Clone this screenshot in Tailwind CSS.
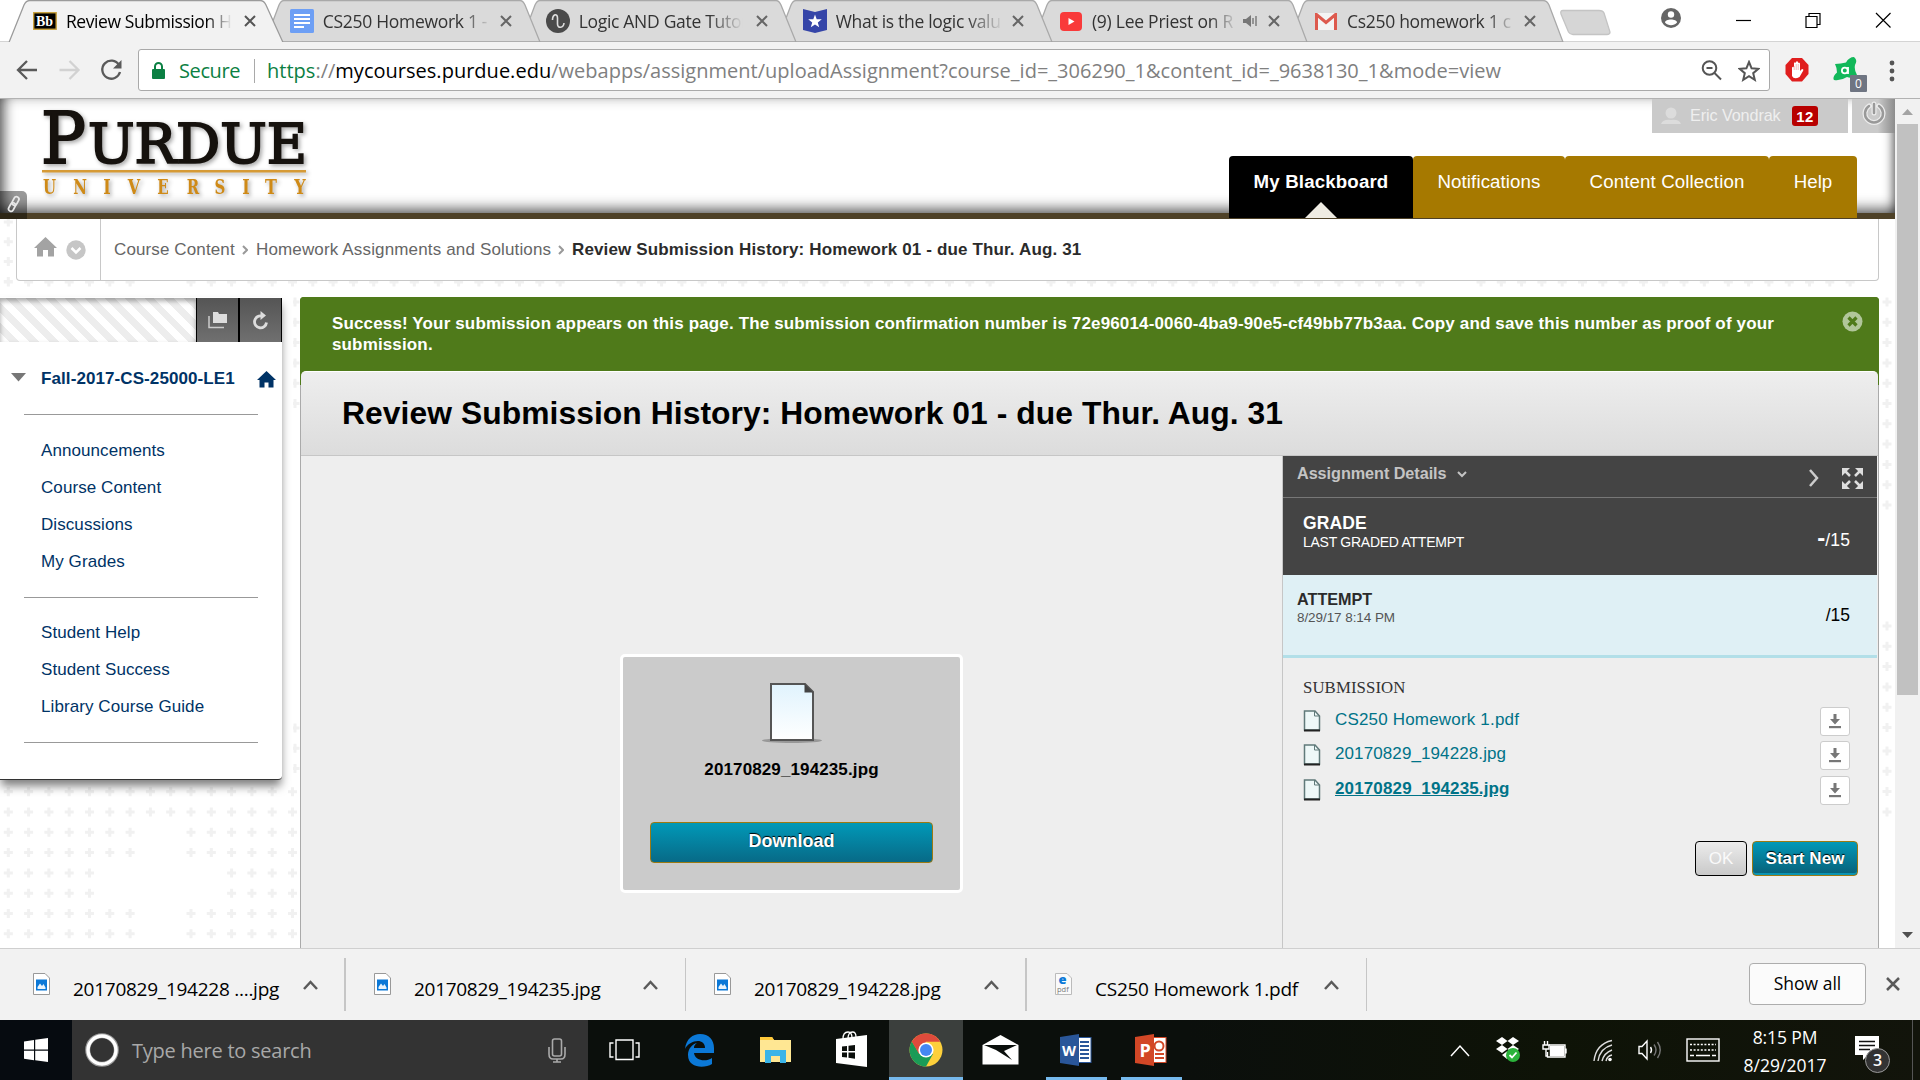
<!DOCTYPE html>
<html lang="en">
<head>
<meta charset="utf-8">
<title>Review Submission History</title>
<script src="https://cdn.jsdelivr.net/npm/@tailwindcss/browser@4"></script>
</head>
<body class="w-[1920px] h-[1080px] overflow-hidden bg-white flex flex-col font-['Liberation_Sans',Arial,sans-serif]">

<!-- Tab strip -->
<div class="relative h-[42px] shrink-0 flex font-['Open_Sans',sans-serif] text-[17.5px] leading-[43px] text-[#333]">
  <svg class="absolute left-0 top-0" width="1920" height="43" fill="#dadada" stroke="#a9a9a9" stroke-width="1.3">
    <path d="M0 42.4H1920" stroke="#a0a0a0"/>
    <path d="M1308 .5Q1305 .5 1303 5L1289 42H1563L1549 5Q1547 .5 1543 .5Z"/>
    <path d="M1052 .5Q1049 .5 1047 5L1033 42H1307L1293 5Q1291 .5 1288 .5Z"/>
    <path d="M796 .5Q793 .5 791 5L777 42H1052L1037 5Q1035 .5 1032 .5Z"/>
    <path d="M540 .5Q537 .5 535 5L521 42H796L781 5Q779 .5 776 .5Z"/>
    <path d="M284 .5Q281 .5 279 5L265 42H540L525 5Q523 .5 520 .5Z"/>
    <path d="M0 42.4H9L24 5Q26 .5 30 .5H260Q264 .5 266 5L283 42.4V44H0Z" fill="#f2f2f2" stroke="none"/>
    <path d="M0 42.4H9L24 5Q26 .5 30 .5H260Q264 .5 266 5L283 42.4H1920" fill="none" stroke="#9b9b9b"/>
    <path d="M1563 10.500H1599Q1603 10.500 1604 13L1610 32Q1610 34.500 1607 34.500H1573Q1570 34.500 1568.500 32L1561 14Q1560 10.500 1563 10.500Z" fill="#d6d6d6" stroke="#c4c4c4"/>
  </svg>
  <div class="relative w-[256px] shrink-0 flex items-center pl-[33px]">
    <svg width="24" height="20" viewBox="0 0 24 20"><rect x=".7" y="1.700" width="22.600" height="16.600" fill="#000" stroke="#c9a13c" stroke-width="1.400"/><text x="3" y="15" font-family="Liberation Serif" font-weight="700" font-size="14" fill="#fff">Bb</text></svg>
    <span class="ml-[9px] w-[166px] overflow-hidden whitespace-nowrap tracking-[-0.4px] text-black [mask-image:linear-gradient(to_right,black_140px,transparent_166px)]">Review Submission H</span>
    <svg class="ml-[13px]" width="12" height="12" stroke="#555" stroke-width="2"><path d="M1 1L11 11M11 1L1 11"/></svg>
  </div>
  <div class="relative w-[256px] shrink-0 flex items-center pl-[34px]">
    <svg width="24" height="24"><rect width="24" height="24" rx="1.500" fill="#6d9ff5"/><path d="M4 6H20M4 10H20M4 14H20M4 18H14" stroke="#fff" stroke-width="1.800"/></svg>
    <span class="ml-[9px] w-[168px] overflow-hidden whitespace-nowrap tracking-[-0.3px] [mask-image:linear-gradient(to_right,black_140px,transparent_168px)]">CS250 Homework 1 - G</span>
    <svg class="ml-[11px]" width="12" height="12" stroke="#666" stroke-width="2"><path d="M1 1L11 11M11 1L1 11"/></svg>
  </div>
  <div class="relative w-[256px] shrink-0 flex items-center pl-[34px]">
    <svg width="24" height="24"><circle cx="12" cy="12" r="12" fill="#4a4a4a"/><path d="M6.500 11C6.500 5 11.500 4 11.500 9V15C11.500 20 17.500 19 18 14" stroke="#ddd" stroke-width="1.600" fill="none"/></svg>
    <span class="ml-[9px] w-[168px] overflow-hidden whitespace-nowrap tracking-[-0.3px] [mask-image:linear-gradient(to_right,black_130px,transparent_164px)]">Logic AND Gate Tutorial</span>
    <svg class="ml-[12px]" width="12" height="12" stroke="#666" stroke-width="2"><path d="M1 1L11 11M11 1L1 11"/></svg>
  </div>
  <div class="relative w-[256px] shrink-0 flex items-center pl-[35px]">
    <svg width="24" height="24"><path d="M0 0L12 3L24 0V21L12 24L0 21Z" fill="#3545a8"/><path d="M12 5.500L13.700 10.300H18.800L14.800 13.400L16.200 18.300L12 15.400L7.800 18.300L9.200 13.400L5.200 10.300H10.300Z" fill="#fff"/></svg>
    <span class="ml-[9px] w-[166px] overflow-hidden whitespace-nowrap tracking-[-0.3px] [mask-image:linear-gradient(to_right,black_130px,transparent_168px)]">What is the logic value</span>
    <svg class="ml-[12px]" width="12" height="12" stroke="#666" stroke-width="2"><path d="M1 1L11 11M11 1L1 11"/></svg>
  </div>
  <div class="relative w-[256px] shrink-0 flex items-center pl-[36px]">
    <svg width="22" height="19"><rect width="22" height="19" rx="4" fill="#f93a3a"/><path d="M8.500 6V13L14.500 9.500Z" fill="#fff"/></svg>
    <span class="ml-[10px] w-[142px] overflow-hidden whitespace-nowrap tracking-[-0.25px] [mask-image:linear-gradient(to_right,black_118px,transparent_145px)]">(9) Lee Priest on R</span>
    <svg class="ml-[10px]" width="14" height="14" fill="#777"><path d="M0 5H3L8 1V13L3 9H0Z"/><path d="M10 4V10M13 2V12" stroke="#777" stroke-width="1.400"/></svg>
    <svg class="ml-[11px]" width="12" height="12" stroke="#666" stroke-width="2"><path d="M1 1L11 11M11 1L1 11"/></svg>
  </div>
  <div class="relative w-[256px] shrink-0 flex items-center pl-[35px]">
    <svg width="22" height="17"><rect width="22" height="17" rx="1" fill="#f4f4f4"/><path d="M1.500 17V1.500L11 9.500L20.500 1.500V17" fill="none" stroke="#dd5a4e" stroke-width="3"/></svg>
    <span class="ml-[10px] w-[166px] overflow-hidden whitespace-nowrap tracking-[-0.3px] [mask-image:linear-gradient(to_right,black_140px,transparent_168px)]">Cs250 homework 1 c</span>
    <svg class="ml-[11px]" width="12" height="12" stroke="#666" stroke-width="2"><path d="M1 1L11 11M11 1L1 11"/></svg>
  </div>
  <div class="relative flex-1 flex items-start">
    <svg class="ml-[125px] mt-[8px]" width="20" height="20"><circle cx="10" cy="10" r="10" fill="#666"/><circle cx="10" cy="6.500" r="3.200" fill="#fff"/><path d="M4 14.500C4 10.500 16 10.500 16 14.500C13 18 7 18 4 14.500Z" fill="#fff"/></svg>
    <svg class="ml-[55px] mt-[12px]" width="16" height="16" fill="none" stroke="#000" stroke-width="1.200"><path d="M0 8.500H15"/></svg>
    <svg class="ml-[53px] mt-[12px]" width="17" height="17" fill="none" stroke="#000" stroke-width="1.200"><path d="M1 4.500H12V15.500H1ZM4 4.500V1.500H15V12.500H12"/></svg>
    <svg class="ml-[53px] mt-[12px]" width="17" height="17" fill="none" stroke="#000" stroke-width="1.200"><path d="M1 1L15.500 15.500M15.500 1L1 15.500"/></svg>
  </div>
</div>

<!-- Toolbar -->
<div class="relative h-[57px] shrink-0 bg-[#f2f2f2] border-b border-[#b2b2b2] flex items-start pt-[7px] font-['Open_Sans',sans-serif] text-[20px]">
  <svg class="ml-[16px] mt-[10px]" width="108" height="22" fill="none" stroke="#5a5a5a" stroke-width="2.300">
    <path d="M21 11H2.500M11 2L2 11L11 20"/>
    <path d="M43.500 11H62M53.500 2L62.500 11L53.500 20" stroke="#d2d2d2"/>
    <path d="M103 6A9 9 0 1 0 104 13"/><path d="M105.500 1V9.500H97Z" fill="#5a5a5a" stroke="none"/>
  </svg>
  <div class="ml-[14px] w-[1632px] h-[42px] pt-px border border-[#a9a9a9] rounded-[3px] bg-white flex items-center">
    <svg class="ml-[13px]" width="13" height="18"><rect y="7" width="13" height="10" rx="1" fill="#0b8043"/><path d="M3 8V4.500A3.500 3.500 0 0 1 10 4.500V8" fill="none" stroke="#0b8043" stroke-width="2"/></svg>
    <span class="ml-[14px] w-[61px] whitespace-nowrap tracking-[-0.4px] text-[#0b8043]">Secure</span>
    <span class="ml-[14px] w-px h-[24px] bg-[#a9a9a9]"></span>
    <span class="ml-[12px] whitespace-nowrap tracking-[0.015px] text-[#808080]"><span class="text-[#0b8043]">https</span>://<span class="text-black">mycourses.purdue.edu</span>/webapps/assignment/uploadAssignment?course_id=_306290_1&amp;content_id=_9638130_1&amp;mode=view</span>
    <svg class="ml-auto" width="21" height="21" fill="none" stroke="#555" stroke-width="2"><circle cx="8.500" cy="8" r="6.800"/><path d="M13.500 13L20 19.500M5.500 8H11.500"/></svg>
    <svg class="ml-[16px] mr-[9px]" width="22" height="22" fill="none" stroke="#555" stroke-width="2"><path d="M11 2L13.600 8.300L20.300 8.800L15.200 13.200L16.800 19.800L11 16.200L5.200 19.800L6.800 13.200L1.700 8.800L8.400 8.300Z"/></svg>
  </div>
  <svg class="ml-[15px] mt-[9px]" width="24" height="24"><path d="M7 0H17L23.500 7V16L17 23.500H7L.5 16V7Z" fill="#e01e1e"/><path d="M7 18V9.500Q8.200 8 9 9.500V5Q10 3.500 11 5V3.800Q12 2.500 13 3.800V5Q14 4 15 5.500V13L17 11Q19 11 18 13L14.500 19Q9 22 7 18Z" fill="#fff"/><path d="M9.200 8V12M11.200 6V12M13.200 6V12" stroke="#e9a0a0" stroke-width=".7"/></svg>
  <div class="relative ml-[24px] mt-[8px] w-[35px] h-[36px]">
    <svg width="26" height="26"><path d="M2 7Q8 6.500 13 5.500Q16 0 21 0Q25 3 22 8Q21 13 24 18Q19 22 14 20Q8 24 1 23Q-1 20 4 15.500Q4 11 2 7Z" fill="#12b85a"/><circle cx="11.800" cy="13.500" r="2.900" fill="none" stroke="#fff" stroke-width="1.800"/><path d="M15 10V17" stroke="#fff" stroke-width="1.800"/></svg>
    <span class="absolute left-[17px] top-[18px] w-[17px] h-[17px] bg-[#6f7582] text-white text-[12px] leading-[17px] text-center rounded-[1px]">0</span>
  </div>
  <svg class="ml-[21px] mt-[9px]" width="6" height="26" fill="#555"><circle cx="3" cy="5" r="2.400"/><circle cx="3" cy="13" r="2.400"/><circle cx="3" cy="21" r="2.400"/></svg>
</div>

<!-- Page viewport -->
<div class="h-[849px] shrink-0 flex">
  <div class="relative w-[1895px] h-full overflow-hidden flex flex-col bg-white">
    <svg id="pluses" class="absolute left-0 top-0" width="1895" height="849" stroke="#f1f1f1" stroke-width="3"></svg>

    <!-- Masthead -->
    <header class="relative h-[120px] shrink-0 bg-white border-b-[6px] border-[#4e4127] flex justify-between items-start shadow-[inset_0_-12px_14px_-8px_rgba(0,0,0,.65),inset_14px_0_12px_-9px_rgba(0,0,0,.55),inset_-12px_0_10px_-9px_rgba(0,0,0,.5),inset_0_8px_12px_-8px_rgba(0,0,0,.25)]">
      <svg class="ml-[36px] mt-[4px] drop-shadow-[2px_2px_2px_rgba(0,0,0,.35)]" width="280" height="104">
        <g font-family="DejaVu Serif" fill="#16120e" stroke="#16120e" stroke-width="2">
          <text x="5" y="59.500" font-size="71" textLength="45" lengthAdjust="spacingAndGlyphs">P</text>
          <text x="52" y="59.500" font-size="55" textLength="219" lengthAdjust="spacingAndGlyphs">URDUE</text>
        </g>
        <rect x="6" y="67" width="264" height="2.500" fill="#d69a35"/>
        <g font-family="DejaVu Serif" font-weight="700" font-size="20" fill="#cf8a17" text-anchor="middle">
          <text transform="translate(13.500 91) scale(.75 1)">U</text><text transform="translate(44 91) scale(.75 1)">N</text><text transform="translate(71 91) scale(.8 1)">I</text><text transform="translate(98 91) scale(.8 1)">V</text><text transform="translate(127 91) scale(.75 1)">E</text><text transform="translate(157 91) scale(.75 1)">R</text><text transform="translate(184 91) scale(.75 1)">S</text><text transform="translate(210 91) scale(.8 1)">I</text><text transform="translate(235 91) scale(.8 1)">T</text><text transform="translate(264 91) scale(.8 1)">Y</text>
        </g>
      </svg>
      <div class="absolute left-0 top-[92px] w-[27px] h-[28px] rounded-tr-[5px] bg-black/40 flex items-center justify-center">
        <svg class="-mt-[3px]" width="16" height="18" fill="none" stroke="#e8e8e8" stroke-width="1.800"><rect x="7" y="1.500" width="5" height="9" rx="2.500" transform="rotate(28 9.500 6)"/><rect x="3.500" y="7.500" width="5" height="9" rx="2.500" transform="rotate(28 6 12)"/></svg>
      </div>
      <div class="flex flex-col items-end">
        <div class="flex h-[34px] gap-[4px]">
          <div class="w-[196px] bg-[#cacaca] flex items-center pl-[9px] pb-px text-[16.2px] text-[#efefef]">
            <svg width="20" height="20" fill="#dcdcdc"><circle cx="10" cy="7" r="5.500"/><path d="M0 18Q2 13 10 14Q18 13 20 18Z"/></svg>
            <span class="ml-[9px] w-[92px] whitespace-nowrap tracking-[-0.1px]">Eric Vondrak</span>
            <span class="ml-[10px] w-[26px] h-[20px] rounded-[3px] bg-[#b80000] text-white font-bold text-[15px] leading-[21px] text-center tracking-[.5px]">12</span>
          </div>
          <div class="w-[43px] bg-linear-to-r from-[#cacaca] from-60% to-[#8c8c8c] flex items-start pt-[2px] justify-center">
            <svg width="24" height="26" fill="none" stroke-linecap="round"><path d="M7 5A9 9 0 1 0 17 5M12 3V12" stroke="#ececec" stroke-width="5"/><path d="M7 5A9 9 0 1 0 17 5M12 3V12" stroke="#999" stroke-width="2.500"/></svg>
          </div>
        </div>
        <nav class="relative mt-[23px] mr-[38px] h-[62px] flex text-white text-[18.7px] leading-[52px] text-center whitespace-nowrap">
          <div class="relative w-[184px] rounded-t-[4px] bg-black font-bold tracking-[.15px]">My Blackboard
            <svg class="absolute left-[76px] bottom-0" width="32" height="16"><path d="M0 16L16 0L32 16Z" fill="#efece3"/></svg>
          </div>
          <div class="w-[152px] rounded-t-[4px] bg-[#a67900] tracking-[.09px]">Notifications</div>
          <div class="w-[204px] rounded-t-[4px] bg-[#a67900] tracking-[.12px]">Content Collection</div>
          <div class="w-[88px] rounded-t-[4px] bg-[#a67900]">Help</div>
        </nav>
      </div>
    </header>

    <!-- Breadcrumbs -->
    <div class="relative ml-[16px] w-[1863px] h-[62px] shrink-0 bg-white border border-t-0 border-[#c8c8c8] rounded-b-[4px] flex items-center text-[17px] text-[#666] whitespace-nowrap">
      <div class="w-[84px] h-full border-r border-[#c8c8c8] flex items-center pl-[17px] gap-[9px]">
        <svg class="-mt-[6px]" width="23" height="20" fill="#a3a3a3"><path d="M11.500 0L23 11H20V19.500H14V13H9V19.500H3V11H0Z"/></svg>
        <svg width="20" height="20"><circle cx="10" cy="10" r="9.700" fill="#c6c6c6"/><path d="M5.500 8L10 12.500L14.500 8" fill="none" stroke="#fff" stroke-width="2.500"/></svg>
      </div>
      <span class="ml-[13px] w-[121px] tracking-[.12px]">Course Content</span>
      <svg class="ml-[7px]" width="6" height="10" fill="none" stroke="#999" stroke-width="2"><path d="M1 1L5 5L1 9"/></svg>
      <span class="ml-[8px] w-[295px] tracking-[.15px]">Homework Assignments and Solutions</span>
      <svg class="ml-[7px]" width="6" height="10" fill="none" stroke="#999" stroke-width="2"><path d="M1 1L5 5L1 9"/></svg>
      <span class="ml-[8px] font-bold text-[#2b2b2b] tracking-[.145px]">Review Submission History: Homework 01 - due Thur. Aug. 31</span>
    </div>

    <div class="relative mt-[16px] flex-1 flex items-start">
      <!-- Course menu -->
      <aside class="w-[293px] shrink-0 bg-white mr-[7px]">
        <div class="w-[282px] h-[483px] border-b border-[#333] rounded-br-[4px] shadow-[0_7px_10px_-1px_rgba(0,0,0,.5)] bg-white flex flex-col text-[17px] text-[#003366] whitespace-nowrap">
          <div class="h-[44px] mt-px flex shrink-0">
            <div class="w-[196px] bg-[repeating-linear-gradient(45deg,#fff_0_7px,#ededed_7px_14px)] shadow-[inset_0_3px_5px_rgba(0,0,0,.35)]"></div>
            <div class="w-[44px] border-l border-r-2 border-black bg-linear-to-b from-[#555] to-[#707070] flex items-center justify-center">
              <svg width="20" height="18" fill="#ddd"><path d="M5 1H10L11 3H19V12H5Z"/><path d="M1 5V16.500H16" fill="none" stroke="#ccc" stroke-width="1.500"/></svg>
            </div>
            <div class="w-[42px] border-r border-black bg-linear-to-b from-[#555] to-[#707070] flex items-center justify-center">
              <svg width="18" height="19" fill="none" stroke="#ddd" stroke-width="2.800"><path d="M10 5A6 6 0 1 0 14.500 11.500"/><path d="M8.500 0L14 4.500L8.500 9Z" fill="#ddd" stroke="none"/></svg>
            </div>
          </div>
          <div class="h-[72px] shrink-0 flex items-center font-bold pt-[2px]">
            <svg class="ml-[11px] mr-[15px] -mt-[4px]" width="15" height="9"><path d="M0 0H15L7.500 8.500Z" fill="#777"/></svg>
            <span class="w-[194px] tracking-[.09px]">Fall-2017-CS-25000-LE1</span>
            <svg class="ml-[22px]" width="19" height="17" fill="#003366"><path d="M9.500 0L19 9H16.500V16.500H11.500V11.500H7.500V16.500H2.500V9H0Z"/></svg>
          </div>
          <div class="mx-[24px] border-t border-[#999]"></div>
          <ul class="pt-[17px] pl-[41px] leading-[37px] tracking-[.08px]"><li>Announcements</li><li>Course Content</li><li>Discussions</li><li>My Grades</li></ul>
          <div class="mx-[24px] mt-[17px] border-t border-[#999]"></div>
          <ul class="pt-[16px] pl-[41px] leading-[37px] tracking-[.08px]"><li>Student Help</li><li>Student Success</li><li>Library Course Guide</li></ul>
          <div class="mx-[24px] mt-[17px] border-t border-[#999]"></div>
        </div>
      </aside>

      <!-- Main content -->
      <main class="w-[1579px] h-full flex flex-col bg-[#eee] rounded-t-[4px] overflow-hidden">
        <div class="bg-[#4f7a1a] bg-linear-to-b from-[#4f7a1a] from-[88px] to-[#aaa] to-[88px] shrink-0">
          <div class="h-[74px] flex justify-between pl-[32px] pr-[16px] pt-[16px] text-white font-bold text-[17px] leading-[21px] tracking-[.143px]">
            <p class="w-[1450px] whitespace-nowrap">Success! Your submission appears on this page. The submission confirmation number is 72e96014-0060-4ba9-90e5-cf49bb77b3aa. Copy and save this number as proof of your<br>submission.</p>
            <svg class="-mt-[2px]" width="21" height="21"><circle cx="10.500" cy="10.500" r="10" fill="#b1c69a"/><path d="M6.500 6.500L14.500 14.500M14.500 6.500L6.500 14.500" stroke="#4f7a1a" stroke-width="3.200"/></svg>
          </div>
          <div class="mx-px h-[85px] rounded-t-[5px] bg-linear-to-b from-[#eee] to-[#dcdcdc] border-t border-t-white border-b border-b-[#c6c6c6] flex items-center pl-[41px] text-[31.8px] font-bold text-black tracking-[.07px] whitespace-nowrap">Review Submission History: Homework 01 - due Thur. Aug. 31</div>
        </div>
        <div class="flex-1 flex border-x border-[#aaa]">
          <div class="w-[982px] border-r border-[#c6c6c6] flex justify-center items-start pt-[198px]">
            <div class="w-[343px] h-[239px] border-[3px] border-white rounded-[5px] bg-[#cbcbcb] flex flex-col items-center pt-[26px]">
              <svg width="62" height="62"><defs><linearGradient id="pg" x2="0" y2="1"><stop stop-color="#e0f3fd"/><stop offset="1" stop-color="#fff"/></linearGradient></defs><ellipse cx="31" cy="57.500" rx="30" ry="2.500" fill="#777" opacity=".6"/><path d="M10 1H44L52 9V57H10Z" fill="url(#pg)" stroke="#555" stroke-width="2"/><path d="M43.500 1L52 9.500H43.500Z" fill="#444"/></svg>
              <span class="mt-[14px] text-[17px] leading-[22px] font-bold tracking-[.12px]">20170829_194235.jpg</span>
              <button class="mt-[41px] w-[283px] h-[41px] rounded-[4px] border border-[#9c7a12] bg-linear-to-b from-[#0099b8] to-[#076a87] text-white text-[18px] leading-[37px] pb-[2px] font-bold [text-shadow:0_-1px_1px_#000]">Download</button>
            </div>
          </div>
          <div class="flex-1 flex flex-col mr-px text-[17px]">
            <div class="h-[42px] bg-[#444] border-b border-[#777] flex items-start pl-[14px] pr-[14px] text-[#c4c4c4] font-bold">
              <span class="w-[150px] text-[16.2px] leading-[35px] whitespace-nowrap tracking-[-0.04px]">Assignment Details</span>
              <svg class="ml-[10px] mt-[15px]" width="10" height="7" fill="none" stroke="#c4c4c4" stroke-width="2"><path d="M1 1L5 5L9 1"/></svg>
              <svg class="ml-auto mt-[13px]" width="12" height="18" fill="none" stroke="#ccc" stroke-width="2.500"><path d="M2 1L9 9L2 17"/></svg>
              <svg class="ml-[22px] mt-[12px]" width="21" height="21" fill="#ddd" stroke="#ddd" stroke-width="2.500"><path d="M3 3L8 8M18 3L13 8M3 18L8 13M18 18L13 13"/><path stroke="none" d="M0 0H8L0 8ZM21 0H13L21 8ZM0 21H8L0 13ZM21 21H13L21 13Z"/></svg>
            </div>
            <div class="h-[77px] bg-[#444] flex justify-between pl-[20px] pr-[27px] text-white">
              <div class="pt-[15px]"><div class="text-[17.5px] leading-[20px] font-bold tracking-[.1px]">GRADE</div><div class="text-[14px] leading-[18px] tracking-[-.26px]">LAST GRADED ATTEMPT</div></div>
              <div class="pt-[30px] text-[17.5px] leading-[20px] tracking-[.1px]"><b class="text-[24px] leading-[20px]">-</b>/15</div>
            </div>
            <div class="h-[83px] bg-[#dff0f5] border-b-[3px] border-[#b2dfe8] flex justify-between pl-[14px] pr-[27px]">
              <div class="pt-[14px]"><div class="text-[16.2px] leading-[20px] font-bold text-[#2b2b2b]">ATTEMPT</div><div class="text-[13.5px] leading-[18px] text-[#555] tracking-[-.07px]">8/29/17 8:14 PM</div></div>
              <div class="pt-[30px] text-[17.5px] leading-[20px]">/15</div>
            </div>
            <div class="pl-[20px] pr-[27px] pt-[20px]">
              <div class="font-['Liberation_Serif',serif] text-[16.8px] leading-[20px] tracking-[.08px] text-[#333]">SUBMISSION</div>
              <div class="mt-[8px] text-[#007388] flex flex-col gap-[4px]">
                <div class="h-[30px] flex items-center"><svg width="18" height="22"><path d="M1.500 1H12L16.500 6V20H1.500Z" fill="#eef8f8" stroke="#607a7a" stroke-width="1.500"/><path d="M1 20.500H17" stroke="#222" stroke-width="2"/><path d="M11.500 1V6H16.500" fill="none" stroke="#607a7a"/></svg><span class="ml-[14px] -mt-[3px] tracking-[.18px]">CS250 Homework 1.pdf</span>
                  <span class="ml-auto w-[30px] h-[29px] bg-white border border-[#ccc] rounded-[3px] flex items-center justify-center"><svg width="14" height="15" fill="#777"><path d="M5.500 0H8.500V5H12L7 10.500L2 5H5.500Z"/><rect x="1" y="12" width="12" height="2.200"/></svg></span></div>
                <div class="h-[30px] flex items-center"><svg width="18" height="22"><path d="M1.500 1H12L16.500 6V20H1.500Z" fill="#eef8f8" stroke="#607a7a" stroke-width="1.500"/><path d="M1 20.500H17" stroke="#222" stroke-width="2"/><path d="M11.500 1V6H16.500" fill="none" stroke="#607a7a"/></svg><span class="ml-[14px] -mt-[3px] tracking-[.1px]">20170829_194228.jpg</span>
                  <span class="ml-auto w-[30px] h-[29px] bg-white border border-[#ccc] rounded-[3px] flex items-center justify-center"><svg width="14" height="15" fill="#777"><path d="M5.500 0H8.500V5H12L7 10.500L2 5H5.500Z"/><rect x="1" y="12" width="12" height="2.200"/></svg></span></div>
                <div class="mt-px h-[30px] flex items-center"><svg width="18" height="22"><path d="M1.500 1H12L16.500 6V20H1.500Z" fill="#eef8f8" stroke="#607a7a" stroke-width="1.500"/><path d="M1 20.500H17" stroke="#222" stroke-width="2"/><path d="M11.500 1V6H16.500" fill="none" stroke="#607a7a"/></svg><span class="ml-[14px] -mt-[3px] font-bold underline tracking-[.137px]">20170829_194235.jpg</span>
                  <span class="ml-auto w-[30px] h-[29px] bg-white border border-[#ccc] rounded-[3px] flex items-center justify-center"><svg width="14" height="15" fill="#777"><path d="M5.500 0H8.500V5H12L7 10.500L2 5H5.500Z"/><rect x="1" y="12" width="12" height="2.200"/></svg></span></div>
              </div>
            </div>
            <div class="mt-[36px] pr-[19px] flex justify-end gap-[5px]">
              <button class="w-[52px] h-[35px] rounded-[4px] border border-black bg-linear-to-b from-[#ececec] to-[#c9c9c9] text-[#fafafa]">OK</button>
              <button class="w-[106px] h-[35px] rounded-[4px] border border-[#9c7a12] bg-linear-to-b from-[#0099b8] to-[#076078] shadow-[inset_0_-2px_0_#0a94b2] text-white font-bold tracking-[.07px] whitespace-nowrap [text-shadow:0_-1px_1px_#000]">Start New</button>
            </div>
          </div>
        </div>
      </main>
    </div>
  </div>
  <!-- Scrollbar -->
  <div class="w-[25px] bg-[#f1f1f1] flex flex-col items-center">
    <svg class="mt-[10px]" width="11" height="6"><path d="M0 6L5.500 0L11 6Z" fill="#a3a3a3"/></svg>
    <div class="mt-[9px] w-[21px] h-[571px] bg-[#c1c1c1]"></div>
    <svg class="mt-auto mb-[10px]" width="11" height="6"><path d="M0 0L5.500 6L11 0Z" fill="#505050"/></svg>
  </div>
</div>

<!-- Download shelf -->
<div class="h-[72px] shrink-0 bg-[#f2f2f2] border-t border-[#cfcfcf] flex font-['Open_Sans',sans-serif] text-[19px] text-black whitespace-nowrap">
  <div class="w-[346px] my-[9px] border-r-2 border-[#c6c6c6] flex items-start pl-[33px]">
    <svg class="mt-[15px]" width="17" height="22"><path d="M.5 .5H12L16.500 5V21.500H.5Z" fill="#fff" stroke="#999"/><rect x="3" y="6.500" width="11" height="11" fill="#0b78d7"/><path d="M4.500 14L7 10.500L9 13L10.500 11L12.500 14.500V16H4.500Z" fill="#fff" opacity=".9"/></svg>
    <span class="ml-[23px] mt-[17px] w-[207px] tracking-[-.26px]">20170829_194228 ....jpg</span>
    <svg class="ml-[23px] mt-[22px]" width="15" height="11" fill="none" stroke="#5a5a5a" stroke-width="2.500"><path d="M1 9L7.500 2L14 9"/></svg>
  </div>
  <div class="w-[340px] my-[9px] border-r border-[#c6c6c6] flex items-start pl-[28px]">
    <svg class="mt-[15px]" width="17" height="22"><path d="M.5 .5H12L16.500 5V21.500H.5Z" fill="#fff" stroke="#999"/><rect x="3" y="6.500" width="11" height="11" fill="#0b78d7"/><path d="M4.500 14L7 10.500L9 13L10.500 11L12.500 14.500V16H4.500Z" fill="#fff" opacity=".9"/></svg>
    <span class="ml-[23px] mt-[17px] w-[207px] tracking-[-.3px]">20170829_194235.jpg</span>
    <svg class="ml-[22px] mt-[22px]" width="15" height="11" fill="none" stroke="#5a5a5a" stroke-width="2.500"><path d="M1 9L7.500 2L14 9"/></svg>
  </div>
  <div class="w-[341px] my-[9px] border-r-2 border-[#c6c6c6] flex items-start pl-[28px]">
    <svg class="mt-[15px]" width="17" height="22"><path d="M.5 .5H12L16.500 5V21.500H.5Z" fill="#fff" stroke="#999"/><rect x="3" y="6.500" width="11" height="11" fill="#0b78d7"/><path d="M4.500 14L7 10.500L9 13L10.500 11L12.500 14.500V16H4.500Z" fill="#fff" opacity=".9"/></svg>
    <span class="ml-[23px] mt-[17px] w-[207px] tracking-[-.3px]">20170829_194228.jpg</span>
    <svg class="ml-[23px] mt-[22px]" width="15" height="11" fill="none" stroke="#5a5a5a" stroke-width="2.500"><path d="M1 9L7.500 2L14 9"/></svg>
  </div>
  <div class="w-[340px] my-[9px] border-r border-[#c6c6c6] flex items-start pl-[28px]">
    <svg class="mt-[15px]" width="17" height="22"><path d="M.5 .5H12L16.500 5V21.500H.5Z" fill="#fafafa" stroke="#bbb"/><text x="3.500" y="10.500" font-family="Open Sans" font-weight="800" font-size="13" fill="#0b78d7">e</text><text x="2" y="19" font-family="Open Sans" font-size="7.500" fill="#777">pdf</text></svg>
    <span class="ml-[23px] mt-[17px] w-[207px] tracking-[-.25px]">CS250 Homework 1.pdf</span>
    <svg class="ml-[22px] mt-[22px]" width="15" height="11" fill="none" stroke="#5a5a5a" stroke-width="2.500"><path d="M1 9L7.500 2L14 9"/></svg>
  </div>
  <button class="ml-auto mt-[14px] w-[117px] h-[42px] rounded-[4px] border border-[#adadad] bg-[#fbfbfb] text-[17.5px] pb-px">Show all</button>
  <svg class="ml-[20px] mr-[20px] mt-[28px]" width="14" height="14" stroke="#5a5a5a" stroke-width="2.500"><path d="M1 1L13 13M13 1L1 13"/></svg>
</div>

<!-- Taskbar -->
<div class="h-[60px] shrink-0 bg-[#0b0f0c] flex font-['Open_Sans',sans-serif] text-white">
  <div class="w-[72px] bg-[#060b10] flex items-center justify-center"><svg width="24" height="24" fill="#fff"><path d="M0 3.500L10 2V11.500H0ZM11.200 1.800L24 0V11.500H11.200ZM0 12.700H10V22.200L0 20.700ZM11.200 12.700H24V24L11.200 22.300Z"/></svg></div>
  <div class="w-[516px] bg-[#333] flex items-center">
    <svg class="ml-[13px]" width="34" height="34"><circle cx="17" cy="17" r="14.300" fill="none" stroke="#999" stroke-width="5"/><circle cx="17" cy="17" r="14" fill="none" stroke="#fff" stroke-width="3.400"/></svg>
    <span class="ml-[13px] mt-[2px] w-[380px] text-[20px] tracking-[-.24px] text-[#a8a8a8]">Type here to search</span>
    <svg class="ml-[36px]" width="18" height="25" fill="none" stroke="#aaa" stroke-width="1.600"><rect x="4.500" y="1" width="9" height="17" rx="2"/><path d="M1 9V16Q1 21 5 21H13Q17 21 17 16V9M9 21V24M5 24H13"/></svg>
  </div>
  <div class="w-[73px] flex items-center justify-center"><svg width="31" height="22" fill="none" stroke="#fff" stroke-width="1.400"><path d="M7 1H24V20.500H7ZM4.500 4H1V18H4.500M26.500 4H30V18H26.500"/></svg></div>
  <div class="w-[77px] flex items-center justify-center"><svg width="31" height="33"><path d="M1 15C2 5 9 0 16 0C25 0 30 6 30 14V19H10C11 27 22 28 28 24V30C20 35 4 34 4 21C4 15 8 10 13 9C10 11 10 13 10 14H21C21 3 5 6 1 15Z" fill="#0b78d7"/></svg></div>
  <div class="w-[76px] flex items-center justify-center"><svg width="32" height="28"><path d="M0 1H12L14 4H31V26H0Z" fill="#ffe793"/><path d="M0 1H12L14 4H0Z" fill="#ffc93a"/><path d="M5 14H26V27H20V20H11V27H5Z" fill="#3bb4e8"/></svg></div>
  <div class="w-[75px] flex items-center justify-center"><svg class="-mt-[1px]" width="33" height="37"><path d="M8 8Q8 1 13 1Q17 1 17 7M13 8Q13 1 17.500 1Q21 1 21 6" stroke="#fff" fill="none" stroke-width="1.300"/><path d="M1 8L32 4V36L1 32Z" fill="#fff"/><path d="M7 15.500L12 15V20H7ZM13.500 14.800L20 14V20H13.500ZM7 21.500H12V26.500L7 26ZM13.500 21.500H20V27.700L13.500 26.800Z" fill="#0b0f0c"/></svg></div>
  <div class="relative w-[74px] bg-[#3b3f3d] flex items-center justify-center"><svg width="34" height="34"><circle cx="17" cy="17" r="16.500" fill="#fdd03b"/><path d="M2.700 8.800A16.500 16.500 0 0 0 17 33.500L24 21L17 17L10 21Z" fill="#1a9b57"/><path d="M2.700 8.800A16.500 16.500 0 0 1 31.300 8.800H17L10 21Z" fill="#df4b3c"/><path d="M2.700 8.800L10 21L12 24L6 25Z" fill="#1a9b57"/><circle cx="17" cy="17" r="7.600" fill="#fff"/><circle cx="17" cy="17" r="6" fill="#4587f3"/></svg><span class="absolute inset-x-0 bottom-0 h-[3px] bg-[#76b9ed]"></span></div>
  <div class="w-[75px] flex items-center justify-center"><svg width="37" height="30"><path d="M.5 10L18.500 0L36.500 10V29.500H.5Z" fill="#fff"/><path d="M2 10H35L22 16L30 25L14 15Z" fill="#0b0f0c"/></svg></div>
  <div class="w-[76px] flex flex-col items-center"><svg class="mt-[14px]" width="32" height="32"><rect x="17" y="3.500" width="14" height="25" fill="#fff" stroke="#2a5699"/><path d="M20 8H29M20 12H29M20 16H29M20 20H29M20 24H29" stroke="#2a5699" stroke-width="1.800"/><path d="M0 3L19 0V32L0 29Z" fill="#2a5699"/><text x="2" y="21.500" font-family="Open Sans" font-weight="700" font-size="15" fill="#fff" textLength="14" lengthAdjust="spacingAndGlyphs">W</text></svg><div class="mt-auto w-[61px] h-[3px] bg-[#76b9ed]"></div></div>
  <div class="w-[74px] flex flex-col items-center"><svg class="mt-[14px]" width="32" height="32"><rect x="17" y="3.500" width="14" height="25" fill="#fff" stroke="#d24726"/><circle cx="24" cy="12" r="4.500" fill="#fff" stroke="#d24726" stroke-width="2"/><path d="M20 20H29M20 24H29" stroke="#d24726" stroke-width="1.800"/><path d="M0 3L19 0V32L0 29Z" fill="#d24726"/><text x="4.500" y="22.500" font-family="Open Sans" font-weight="700" font-size="18" fill="#fff">P</text></svg><div class="mt-auto w-[61px] h-[3px] bg-[#76b9ed]"></div></div>
  <div class="flex-1 flex items-center bg-linear-to-r from-[#0b0f0c] via-[#0e1307] to-[#12140b]">
    <svg class="ml-[262px]" width="20" height="13" fill="none" stroke="#fff" stroke-width="1.500"><path d="M1 12L10 2L19 12"/></svg>
    <svg class="ml-[25px]" width="26" height="26" fill="#fff"><path d="M7 0L12.500 4L7 8L1 4ZM18 0L24 4L18 8L12.500 4ZM7 8L12.500 12L7 16L1 12ZM18 8L24 12L18 16L12.500 12ZM7 18L12.500 14L14 20L12 22Z"/><circle cx="18" cy="18" r="7" fill="#2bb33b"/><path d="M14.500 18L17 20.500L21.500 15.500" fill="none" stroke="#fff" stroke-width="1.800"/></svg>
    <svg class="ml-[21px]" width="26" height="18" fill="none" stroke="#fff" stroke-width="1.400"><path d="M1 4H7V8H1ZM2.500 4V0M5.500 4V0M4 8V15H6"/><path d="M7 4H23V16H5.500V11M24 7.500V12.500"/><rect x="8.500" y="5.500" width="13" height="9" fill="#fff"/></svg>
    <svg class="ml-[24px]" width="22" height="24" fill="none" stroke="#ddd" stroke-width="1.400"><path d="M2 23Q4 6 20 2.500M6 23Q8 10 20 7M10 23Q12 15 20 12M14 23Q15 18 20 17"/><circle cx="18" cy="21.500" r="1.800" fill="#fff" stroke="none"/></svg>
    <svg class="ml-[24px]" width="24" height="22" fill="none" stroke="#fff" stroke-width="1.400"><path d="M1 7.500H4L9 2V20L4 14.500H1ZM12.500 8Q14.500 11 12.500 14"/><path d="M16 5.500Q20 11 16 16.500M19.500 3Q25 11 19.500 19" stroke="#777"/></svg>
    <svg class="ml-[24px]" width="34" height="24" fill="none" stroke="#fff" stroke-width="1.400"><rect x="1" y="1" width="32" height="22"/><path d="M4 6.500H30M4 12H30" stroke-dasharray="2 1.600"/><path d="M4 17.500H8M10 17.500H24M26 17.500H30"/></svg>
    <div class="ml-[21px] mt-px w-[88px] text-center text-[17.500px] leading-[28px]"><div class="tracking-[-.13px]">8:15 PM</div><div>8/29/2017</div></div>
    <div class="relative ml-[24px] mt-[8px] w-[36px] h-[36px]">
      <svg class="absolute left-[2px] top-0" width="25" height="24"><path d="M0 0H24V19H13L8 24V19H0Z" fill="#fff"/><path d="M4 5.500H20M4 9.500H20M4 13.500H15" stroke="#111" stroke-width="1.500"/></svg>
      <span class="absolute left-[12px] top-[12px] w-[25px] h-[25px] rounded-full border border-[#999] bg-[#333] text-[16px] leading-[23px] text-center font-semibold">3</span>
    </div>
    <div class="ml-auto mr-[7px] w-px h-full bg-[#555]"></div>
  </div>
</div>

<script>
// Faint plus marks behind the page panels.
const marks = [];
const add = (x, y) => marks.push(`M${x - 4.5} ${y}h9M${x} ${y - 4.5}v9`);
const step = 20.3, tile = 430;
for (let r = 0; r < 4; r++) add(8.3, 123 + r * 19.8);
for (let t = 0; t < 5; t++) for (let c = 0; c < 21; c++) if (c !== 7 && c !== 8) add(8.3 + t * tile + c * step, 183);
for (let r = 0; r < 8; r++) for (let c = 0; c < 15; c++) {
  const narrow = r > 1 && (c === 7 || c === 8);
  const wide = (r === 4 || r === 5) && c > 4 && c < 11;
  if (!narrow && !wide) add(8.3 + c * step, 692.7 + r * step);
}
for (let r = 0; r < 6; r++) add(295, 203 + r * step);
for (let r = 0; r < 3; r++) add(295, 629 + r * step);
for (let r = 0; r < 11; r++) add(1887, 203 + r * step);
for (let r = 0; r < 6; r++) add(1887, 527 + r * step);
for (let r = 0; r < 4; r++) add(1887, 652 + r * step);
document.getElementById('pluses').innerHTML = `<path d="${marks.join('')}"/>`;
</script>
</body>
</html>
